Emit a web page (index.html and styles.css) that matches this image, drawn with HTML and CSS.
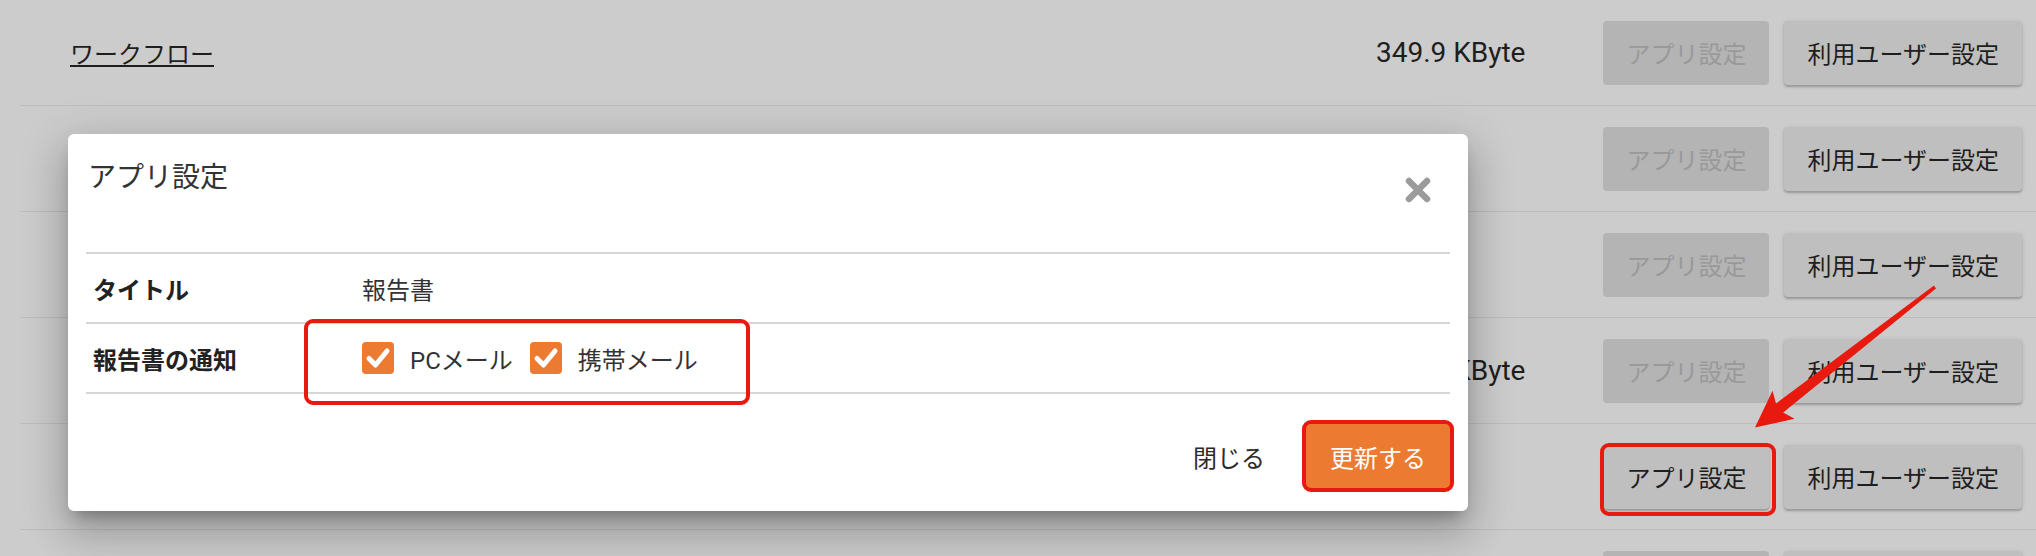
FILE: index.html
```html
<!DOCTYPE html>
<html lang="ja">

<head>
    <meta charset="UTF-8">
    <meta name="viewport" content="width=device-width, initial-scale=1.0">
    <title>アプリ設定</title>
    <link rel="stylesheet" href="styles.css">
</head>

<body>
    <ul class="app-list">
        <li class="app-row">
            <a class="app-name" href="javascript:;">ワークフロー</a>
            <span class="app-size">349.9 KByte</span>
            <button class="btn" disabled>アプリ設定</button>
            <button class="btn">利用ユーザー設定</button>
        </li>
        <li class="app-row">
            <a class="app-name" href="javascript:;">日報</a>
            <span class="app-size"></span>
            <button class="btn" disabled>アプリ設定</button>
            <button class="btn">利用ユーザー設定</button>
        </li>
        <li class="app-row">
            <a class="app-name" href="javascript:;">経費精算</a>
            <span class="app-size"></span>
            <button class="btn" disabled>アプリ設定</button>
            <button class="btn">利用ユーザー設定</button>
        </li>
        <li class="app-row">
            <a class="app-name" href="javascript:;">勤怠管理</a>
            <span class="app-size">12.8 KByte</span>
            <button class="btn" disabled>アプリ設定</button>
            <button class="btn">利用ユーザー設定</button>
        </li>
        <li class="app-row">
            <a class="app-name" href="javascript:;">報告書</a>
            <span class="app-size"></span>
            <span class="mark mark-app"><button class="btn">アプリ設定</button></span>
            <button class="btn">利用ユーザー設定</button>
        </li>
        <li class="app-row">
            <a class="app-name" href="javascript:;">申請書</a>
            <span class="app-size"></span>
            <button class="btn" disabled>アプリ設定</button>
            <button class="btn">利用ユーザー設定</button>
        </li>
    </ul>

    <div class="dialog">
        <div class="dialog-head">
            <h2 class="dialog-title">アプリ設定</h2>
            <button class="dialog-close">
                <svg width="26" height="26" viewBox="0 0 26 26">
                    <path d="M4 4L22 22M22 4L4 22" stroke="#9b9b9b" stroke-width="6.5" stroke-linecap="round" fill="none"/>
                </svg>
            </button>
        </div>
        <div class="field-row">
            <div class="field-label">タイトル</div>
            <div class="field-value">報告書</div>
        </div>
        <div class="field-row">
            <div class="field-label">報告書の通知</div>
            <div class="field-value mark mark-opts">
                <label class="check">
                    <span class="check-box">
                        <svg width="32" height="32" viewBox="0 0 32 32">
                            <path d="M7 16.5L13.5 23L25 9" stroke="#fff" stroke-width="5" stroke-linecap="round" stroke-linejoin="round" fill="none"/>
                        </svg>
                    </span>
                    PCメール
                </label>
                <label class="check">
                    <span class="check-box">
                        <svg width="32" height="32" viewBox="0 0 32 32">
                            <path d="M7 16.5L13.5 23L25 9" stroke="#fff" stroke-width="5" stroke-linecap="round" stroke-linejoin="round" fill="none"/>
                        </svg>
                    </span>
                    携帯メール
                </label>
            </div>
        </div>
        <div class="dialog-foot">
            <button class="btn-text">閉じる</button>
            <span class="mark mark-btn"><button class="btn btn-primary">更新する</button></span>
        </div>
    </div>

    <!-- annotation arrow -->
    <svg class="arrow" width="2036" height="556" viewBox="0 0 2036 556">
        <polygon points="1934,285.4 1776,403.5 1772.5,390.8 1755,427.5 1794.5,418.8 1783.2,412.4 1936,288.6" fill="#e8190f"/>
    </svg>
</body>

</html>
```

FILE: styles.css
```css
html,
body {
    margin: 0;
    overflow: hidden;
}
body {
    position: relative;
    width: 2036px;
    height: 556px;
    background: #cccccc;
    color: #1e1e1e;
    font-family: Roboto, "Noto Sans CJK JP", sans-serif;
    font-size: 24px;
}
button {
    font-family: inherit;
    font-size: 24px;
    cursor: pointer;
}

.app-list {
    list-style: none;
    margin: 0 0 0 20px;
    padding: 0;
}
.app-row {
    display: flex;
    align-items: center;
    gap: 15px;
    height: 105px;
    padding: 0 14px 0 50px;
    border-bottom: 1px solid #bdbdbd;
}
.app-name {
    flex: 1;
    color: #1e1e1e;
}
.app-size {
    margin-right: 63px;
    font-size: 28px;
    text-align: right;
}

.btn {
    height: 64px;
    padding: 0 23px;
    border: none;
    border-radius: 4px;
    background: #bfbfbf;
    color: #1e1e1e;
    box-shadow: 0 2px 2px rgba(0, 0, 0, 0.2), 0 1px 5px rgba(0, 0, 0, 0.1);
}
.btn:disabled {
    background: #b4b4b4;
    color: #999999;
    box-shadow: none;
}

.mark {
    position: relative;
}
.mark-app {
    display: flex;
}
.mark::after {
    content: "";
    position: absolute;
    border: 4px solid #e8190f;
    border-radius: 9px;
    pointer-events: none;
}
.mark-app::after {
    top: -2px;
    bottom: -7px;
    left: -3px;
    right: -7px;
}
.mark-btn {
    display: flex;
}
.mark-btn::after {
    top: -4px;
    bottom: -4px;
    left: -4px;
    right: -4px;
}
.mark-opts::after {
    top: -5px;
    left: -58px;
    width: 438px;
    height: 78px;
}

/* dialog */
.dialog {
    position: absolute;
    left: 68px;
    top: 134px;
    width: 1400px;
    box-sizing: border-box;
    padding: 0 18px;
    background: #fff;
    border-radius: 6px;
    color: #2b2b2b;
    box-shadow: 0 11px 15px -7px rgba(0, 0, 0, 0.3), 0 24px 38px 3px rgba(0, 0, 0, 0.14), 0 9px 46px 8px rgba(0, 0, 0, 0.12);
}
.dialog-head {
    display: flex;
    justify-content: space-between;
    align-items: flex-start;
    height: 120px;
    padding: 24px 0 0 2px;
    box-sizing: border-box;
    border-bottom: 2px solid #d6d6d6;
}
.dialog-title {
    margin: 0;
    font-size: 28px;
    font-weight: normal;
    line-height: 40px;
    color: #333;
}
.dialog-close {
    display: block;
    margin: 19px 19px 0 0;
    padding: 0;
    border: none;
    background: none;
    line-height: 0;
}
.field-row {
    display: grid;
    grid-template-columns: 276px 1fr;
    height: 68px;
    border-bottom: 2px solid #d6d6d6;
}
.field-label {
    display: flex;
    align-items: center;
    padding-left: 7px;
    font-weight: bold;
    color: #222;
}
.field-value {
    display: flex;
    align-items: center;
    color: #333;
}
.check {
    display: inline-flex;
    align-items: center;
    gap: 16px;
    margin-right: 17px;
}
.check-box {
    width: 32px;
    height: 32px;
    border-radius: 4px;
    background: #ed7a31;
    line-height: 0;
}
.dialog-foot {
    display: flex;
    justify-content: flex-end;
    align-items: center;
    padding: 30px 0 23px;
}
.btn-text {
    height: 64px;
    padding: 0 24px;
    margin-right: 17px;
    border: none;
    background: none;
    color: #2b2b2b;
}
.btn-primary {
    padding: 0 24px;
    background: #ed7a31;
    color: #fff;
}

.arrow {
    position: absolute;
    left: 0;
    top: 0;
    pointer-events: none;
}
```
